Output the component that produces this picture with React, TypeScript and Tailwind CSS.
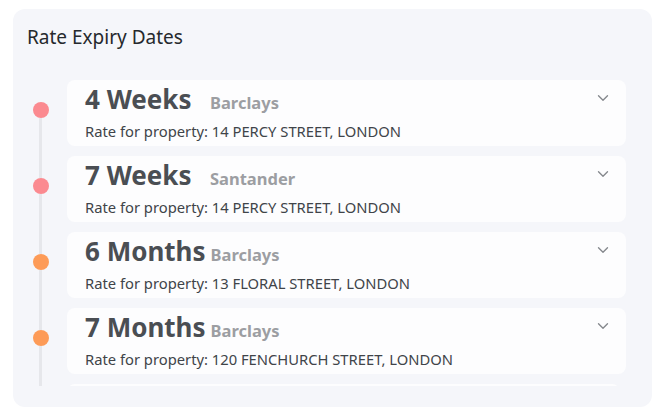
import React from 'react';
import { ChevronDown } from 'lucide-react';

const RATES = [
  { id: 1, term: '4 Weeks', bank: 'Barclays', address: '14 PERCY STREET, LONDON', tone: 'pink' },
  { id: 2, term: '7 Weeks', bank: 'Santander', address: '14 PERCY STREET, LONDON', tone: 'pink' },
  { id: 3, term: '6 Months', bank: 'Barclays', address: '13 FLORAL STREET, LONDON', tone: 'orange' },
  { id: 4, term: '7 Months', bank: 'Barclays', address: '120 FENCHURCH STREET, LONDON', tone: 'orange' },
];

const dotColor: Record<string, string> = {
  pink: 'bg-[#fb8a90]',
  orange: 'bg-[#fd9b57]',
};

export default function App() {
  return (
    <div className="w-[660px] h-[416px] bg-white pt-[9px] pl-[13px]" style={{ fontFamily: '"Noto Sans", "Open Sans", sans-serif' }}>
      <div className="w-[639px] h-[398px] rounded-xl bg-[#f5f6fa] pl-[14px] pr-[26px] pt-[14px]">
        <h3 className="text-[19px] leading-[28px] text-[#25292d] mb-[29px]">Rate Expiry Dates</h3>

        <div className="h-[306px] overflow-hidden">
          {RATES.map((item, i) => (
            <div key={item.id} className="flex">
              <div className="w-[27px] flex flex-col items-center">
                <div className={`w-[3px] h-[22px] ${i === 0 ? 'bg-transparent' : 'bg-[#e6e7eb]'}`}></div>
                <div className={`w-4 h-4 rounded-full ${dotColor[item.tone]}`}></div>
                <div className="w-[3px] flex-1 bg-[#e6e7eb]"></div>
              </div>
              <div className="flex-1 ml-[13px] pb-[10px]">
                <div className="h-[66px] rounded-lg bg-[#fdfdfe] flex justify-between pl-[18px] pr-[14px]">
                  <div className="pt-[1px]">
                    <div className="leading-[36px] whitespace-nowrap">
                      <span className="inline-block min-w-[120px] text-[26px] font-bold text-[#4a4e53]">{item.term}</span>
                      <span className="ml-[5px] text-[16.5px] font-bold text-[#9c9ea2]">{item.bank}</span>
                    </div>
                    <p className="text-[14.75px] leading-[20px] text-[#404449] whitespace-nowrap">
                      Rate for property: {item.address}
                    </p>
                  </div>
                  <ChevronDown size={18} strokeWidth={1.8} className="mt-[9px] text-[#85888d]" />
                </div>
              </div>
            </div>
          ))}
          <div className="flex">
            <div className="w-[27px] flex flex-col items-center">
              <div className="w-[3px] h-[22px] bg-[#e6e7eb]"></div>
            </div>
            <div className="flex-1 ml-[13px] mr-[6px] h-[66px] rounded-lg bg-[#fdfdfe]"></div>
          </div>
        </div>
      </div>
    </div>
  );
}
